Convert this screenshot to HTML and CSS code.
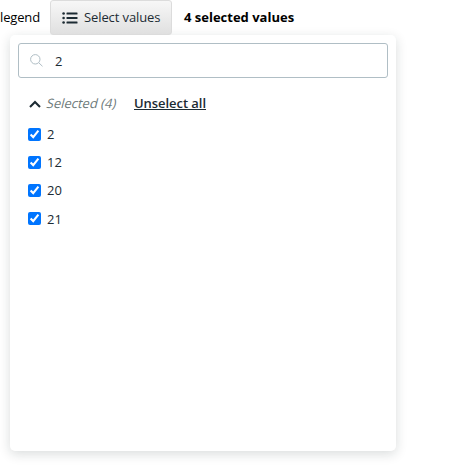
FILE: index.html
```html
<!DOCTYPE html>
<html lang="en">
<head>
<meta charset="utf-8">
<title>Select values</title>
<link rel="stylesheet" href="styles.css">
</head>
<body>
<div class="toolbar">
  <span class="label">legend</span>
  <button class="select-button" type="button">
    <svg width="16" height="12" viewBox="0 0 16 12" fill="currentColor"><circle cx="1.6" cy="1.5" r="1.3"/><circle cx="1.6" cy="6" r="1.3"/><circle cx="1.6" cy="10.5" r="1.3"/><rect x="4.5" y="0.6" width="11" height="1.8" rx=".5"/><rect x="4.5" y="5.1" width="11" height="1.8" rx=".5"/><rect x="4.5" y="9.6" width="11" height="1.8" rx=".5"/></svg>
    <span class="button-text">Select values</span>
  </button>
  <strong class="count">4 selected values</strong>
</div>
<div class="panel">
  <div class="search">
    <svg width="13" height="13" viewBox="0 0 13 13" fill="none" stroke="currentColor"><circle cx="5.3" cy="5.3" r="4.7"/><path d="M8.8 8.8 12.5 12.3"/></svg>
    <input class="search-input" type="text" value="2">
  </div>
  <div class="group">
    <svg class="chevron" width="12" height="8" viewBox="0 0 12 8" fill="none" stroke="currentColor" stroke-width="2.1"><path d="M1 6.9 6 1.9 11 6.9"/></svg>
    <span class="group-title">Selected (4)</span>
    <a class="unselect">Unselect all</a>
  </div>
  <div class="options">
    <label class="option"><input type="checkbox" checked><span>2</span></label>
    <label class="option"><input type="checkbox" checked><span>12</span></label>
    <label class="option"><input type="checkbox" checked><span>20</span></label>
    <label class="option"><input type="checkbox" checked><span>21</span></label>
  </div>
</div>
</body>
</html>
```
FILE: styles.css
```css
* { box-sizing: border-box; }
body {
  margin: 0;
  min-height: 470px;
  background: #fff;
  color: #1c2b33;
  font: 13px/18px "Open Sans", sans-serif;
}
.toolbar { display: flex; align-items: center; height: 35px; color: #000; }
.label { width: 50px; padding-bottom: 2px; letter-spacing: -.15px; }
.select-button {
  display: flex;
  align-items: center;
  gap: 6px;
  width: 122px;
  height: 35px;
  padding: 0 0 0 11px;
  border: 1px solid #dcdcdc;
  border-radius: 3px;
  background: linear-gradient(#f7f7f7, #e0e0e0);
  color: #1c2b33;
  font: inherit;
  white-space: nowrap;
}
.button-text { padding-bottom: 2px; letter-spacing: -.1px; }
.count { margin-left: 12px; padding-bottom: 2px; }
.panel {
  width: 386px;
  height: 416px;
  margin-left: 10px;
  padding: 8px;
  border-radius: 5px;
  background: #fff;
  box-shadow: 0 3px 12px rgba(20, 40, 40, .16);
}
.search {
  display: flex;
  align-items: center;
  gap: 12px;
  height: 35px;
  padding-left: 11px;
  border: 1px solid #b0bec5;
  border-radius: 3px;
  color: #b0bec5;
}
.search-input {
  width: 300px;
  padding: 0;
  border: 0;
  outline: 0;
  background: none;
  color: #1c2b33;
  font: inherit;
}
.group { display: flex; align-items: center; height: 18px; margin: 16px 0 0 11px; }
.chevron { margin-top: 2px; }
.group-title {
  width: 87px;
  margin-left: 6px;
  color: #6e7b7b;
  transform: skewX(-14deg);
}
.unselect { font-weight: 600; text-decoration: underline; letter-spacing: -.05px; }
.options { padding: 8px 0 0 10px; }
.option { display: flex; align-items: center; gap: 6px; height: 28.2px; }
.option input { width: 13px; height: 13px; margin: 0; }
```
